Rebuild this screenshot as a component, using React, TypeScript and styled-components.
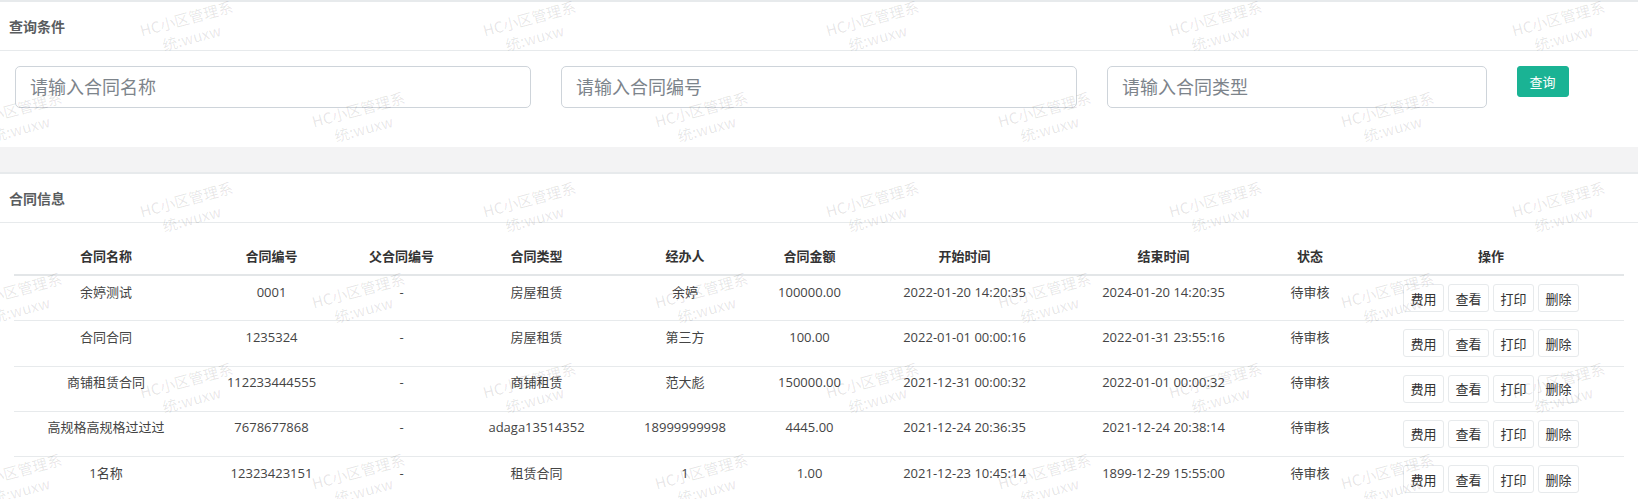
import React from 'react';
import styled, { createGlobalStyle } from 'styled-components';

const GlobalStyle = createGlobalStyle`
  * {
    box-sizing: border-box;
  }
  body {
    margin: 0;
    background: #f3f3f4;
    font-family: "Open Sans", "Noto Sans CJK SC", sans-serif;
    font-size: 13px;
    color: #444;
  }
`;

const Page = styled.div`
  position: relative;
  display: flex;
  flex-direction: column;
  min-height: 100vh;
  overflow: hidden;
`;

const Box = styled.section<{ $fill?: boolean }>`
  background: #ffffff;
  margin-bottom: ${props => (props.$fill ? '0' : '25px')};
  flex: ${props => (props.$fill ? '1' : 'none')};
`;

const BoxTitle = styled.div`
  height: 51px;
  padding: 15px 9px 0;
  border-top: 2px solid #e7eaec;
  border-bottom: 1px solid #e7eaec;
`;

const TitleText = styled.h5`
  margin: 0;
  font-size: 14px;
  line-height: 20px;
  font-weight: 700;
  color: #5a5d5f;
`;

const SearchRow = styled.div`
  display: grid;
  grid-template-columns: 4fr 4fr 3fr 1fr;
  padding: 15px 0 39px;
`;

const SearchCell = styled.div`
  padding: 0 15px;
`;

const SearchInput = styled.input`
  display: block;
  width: 100%;
  height: 42px;
  padding: 0 14px;
  border: 1px solid #ced4da;
  border-radius: 5px;
  font-family: "Open Sans", "Noto Sans CJK SC", sans-serif;
  font-size: 18px;
  color: #495057;
  background: #fff;
  outline: none;

  &::placeholder {
    color: #7d848b;
  }
`;

const PrimaryButton = styled.button`
  height: 31px;
  padding: 0 12px;
  border: 1px solid #1ab394;
  border-radius: 3px;
  background: #1ab394;
  color: #ffffff;
  font-family: "Open Sans", "Noto Sans CJK SC", sans-serif;
  font-size: 13px;
  cursor: pointer;
`;

const TableWrap = styled.div`
  padding: 15px 14px 0;
`;

const Table = styled.table`
  width: 100%;
  table-layout: fixed;
  border-collapse: collapse;
`;

const HeadCell = styled.th`
  padding: 8px 4px;
  line-height: 20px;
  font-size: 13px;
  font-weight: 700;
  color: #333;
  text-align: center;
  border-bottom: 2px solid #e3e6e8;
  white-space: nowrap;
`;

const Cell = styled.td<{ $action?: boolean }>`
  padding: ${props => (props.$action ? '8px 4px 8.3px' : '5.5px 4px 8.3px')};
  line-height: 20px;
  font-size: 13px;
  color: #444;
  text-align: center;
  vertical-align: top;
  border-bottom: 1px solid #e7eaec;
  white-space: nowrap;
`;

const ActionGroup = styled.div`
  display: flex;
  justify-content: center;
  gap: 4px;
`;

const ActionButton = styled.button`
  height: 28px;
  width: 41px;
  padding: 0;
  border: 1px solid #e7eaec;
  border-radius: 3px;
  background: #ffffff;
  color: #333;
  font-family: "Open Sans", "Noto Sans CJK SC", sans-serif;
  font-size: 13px;
  cursor: pointer;
`;

const WatermarkLayer = styled.div`
  position: absolute;
  inset: 0;
  pointer-events: none;
  overflow: hidden;
  z-index: 10;
`;

const Watermark = styled.div`
  position: absolute;
  transform: translate(-50%, -50%) rotate(-15deg);
  font-family: "Noto Sans CJK SC", sans-serif;
  font-size: 15px;
  line-height: 20px;
  text-align: center;
  white-space: nowrap;
  color: rgba(0, 0, 0, 0.1);
  user-select: none;
`;

const columns = [
  { title: '合同名称', width: 184 },
  { title: '合同编号', width: 147 },
  { title: '父合同编号', width: 113 },
  { title: '合同类型', width: 157 },
  { title: '经办人', width: 140 },
  { title: '合同金额', width: 109 },
  { title: '开始时间', width: 201 },
  { title: '结束时间', width: 197 },
  { title: '状态', width: 96 },
  { title: '操作', width: 266 },
];

const contracts = [
  ['余婷测试', '0001', '-', '房屋租赁', '余婷', '100000.00', '2022-01-20 14:20:35', '2024-01-20 14:20:35', '待审核'],
  ['合同合同', '1235324', '-', '房屋租赁', '第三方', '100.00', '2022-01-01 00:00:16', '2022-01-31 23:55:16', '待审核'],
  ['商铺租赁合同', '112233444555', '-', '商铺租赁', '范大彪', '150000.00', '2021-12-31 00:00:32', '2022-01-01 00:00:32', '待审核'],
  ['高规格高规格过过过', '7678677868', '-', 'adaga13514352', '18999999998', '4445.00', '2021-12-24 20:36:35', '2021-12-24 20:38:14', '待审核'],
  ['1名称', '12323423151', '-', '租赁合同', '1', '1.00', '2021-12-23 10:45:14', '1899-12-29 15:55:00', '待审核'],
];

const actions = ['费用', '查看', '打印', '删除'];

// lattice of the "HC小区管理系统:wuxw" watermark
const watermarks: { x: number; y: number }[] = [];
for (let r = 0; r < 7; r++) {
  const y = 28 + 90.5 * r;
  const x0 = r % 2 === 0 ? 189 : 18;
  for (let n = 0; n < 6; n++) {
    watermarks.push({ x: x0 + 343 * n, y });
  }
}

const App: React.FC = () => {
  return (
    <Page>
      <GlobalStyle />
      <Box>
        <BoxTitle>
          <TitleText>查询条件</TitleText>
        </BoxTitle>
        <SearchRow>
          <SearchCell>
            <SearchInput placeholder="请输入合同名称" />
          </SearchCell>
          <SearchCell>
            <SearchInput placeholder="请输入合同编号" />
          </SearchCell>
          <SearchCell>
            <SearchInput placeholder="请输入合同类型" />
          </SearchCell>
          <SearchCell>
            <PrimaryButton type="button">查询</PrimaryButton>
          </SearchCell>
        </SearchRow>
      </Box>

      <Box $fill>
        <BoxTitle>
          <TitleText>合同信息</TitleText>
        </BoxTitle>
        <TableWrap>
          <Table>
            <colgroup>
              {columns.map(c => (
                <col key={c.title} style={{ width: c.width }} />
              ))}
            </colgroup>
            <thead>
              <tr>
                {columns.map(c => (
                  <HeadCell key={c.title}>{c.title}</HeadCell>
                ))}
              </tr>
            </thead>
            <tbody>
              {contracts.map(row => (
                <tr key={row[1]}>
                  {row.map((value, i) => (
                    <Cell key={i}>{value}</Cell>
                  ))}
                  <Cell $action>
                    <ActionGroup>
                      {actions.map(a => (
                        <ActionButton key={a} type="button">{a}</ActionButton>
                      ))}
                    </ActionGroup>
                  </Cell>
                </tr>
              ))}
            </tbody>
          </Table>
        </TableWrap>
      </Box>

      <WatermarkLayer>
        {watermarks.map((w, i) => (
          <Watermark key={i} style={{ left: w.x, top: w.y }}>
            HC小区管理系
            <br />
            统:wuxw
          </Watermark>
        ))}
      </WatermarkLayer>
    </Page>
  );
};

export default App;
